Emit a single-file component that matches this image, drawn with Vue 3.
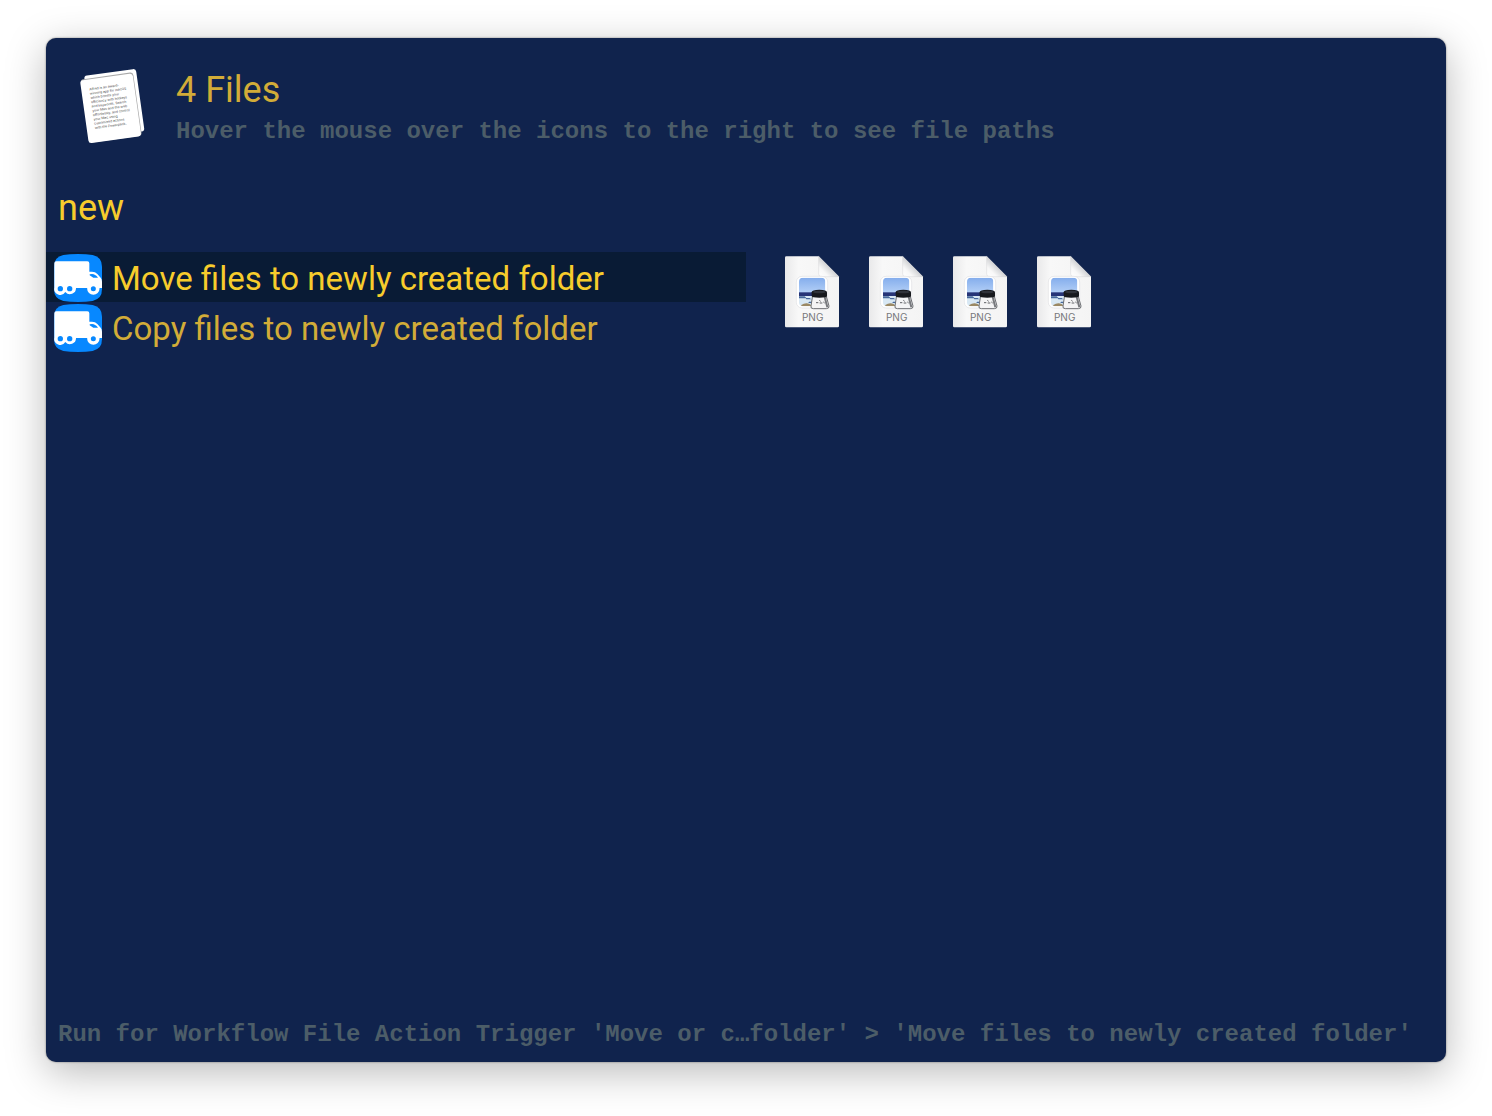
<script setup>
import { ref } from 'vue'

const query = ref('new')
const selected = ref(0)
const actions = ['Move files to newly created folder', 'Copy files to newly created folder']
const files = ['1.png', '2.png', '3.png', '4.png']
const sheetLines = [
  'Alfred is an award-',
  'winning app for macOS',
  'which boosts your',
  'efficiency with hotkeys',
  'and keywords. Search',
  'your Mac and the web',
  'effortlessly, and control',
  'your Mac using',
  'customised actions',
  'with the Powerpack.',
]
</script>

<template>
  <main class="panel">
    <header class="header">
      <svg class="sheets" viewBox="0 0 270 270" aria-hidden="true">
        <g transform="translate(42 48) rotate(-8)">
          <rect width="157" height="189" rx="9" fill="#fff" />
        </g>
        <g transform="translate(30 62) rotate(-8)">
          <rect x="2" y="-3" width="159" height="192" rx="9" fill="#a9a9a9" />
          <rect width="159" height="190" rx="9" fill="#fff" />
          <text v-for="(line, i) in sheetLines" :key="i" class="sheet-text" x="24" :y="33 + i * 13">{{ line }}</text>
        </g>
      </svg>
      <div class="heading">
        <h1 class="title">4 Files</h1>
        <p class="hint">Hover the mouse over the icons to the right to see file paths</p>
      </div>
    </header>

    <input v-model="query" class="query" type="text" aria-label="Filter actions" spellcheck="false" />

    <div class="columns">
      <ul class="actions">
        <li v-for="(action, i) in actions" :key="action">
          <button class="action" :class="{ active: i === selected }" type="button" @click="selected = i">
            <svg class="truck" viewBox="0 0 144 144" aria-hidden="true">
              <path d="M0 38Q0 9 28 3 46 0 72 0t44 3q28 6 28 35v68q0 29-28 35-18 3-44 3t-44-3Q0 135 0 106Z" fill="#0788ff" />
              <path d="M1 28q0-6 6-6h93q6 0 6 6v25h8q10 0 16 7l10 11q4 5 4 12v19h-8a18 18 0 0 1-35 0H66a18 18 0 0 1-32 12A18 18 0 0 1 1 101Z" fill="#fff" />
              <path d="M107 61v3l11 7h14q-8-11-18-11Z" fill="#0788ff" />
              <g fill="#0788ff">
                <circle cx="19" cy="104" r="8" />
                <circle cx="47" cy="104" r="8" />
              </g>
              <circle cx="118" cy="104" r="13" fill="#0788ff" stroke="#fff" stroke-width="11" />
            </svg>
            <span>{{ action }}</span>
          </button>
        </li>
      </ul>

      <ul class="files">
        <li v-for="file in files" :key="file" class="file">
          <svg class="png" viewBox="0 0 168 222" role="img" aria-label="PNG file">
            <defs>
              <linearGradient id="paper" x1="0" y1="0" x2="1" y2="0">
                <stop offset="0" stop-color="#e9e9ea" />
                <stop offset=".25" stop-color="#f8f8f8" />
                <stop offset="1" stop-color="#f4f4f4" />
              </linearGradient>
              <linearGradient id="fold" x1="0" y1="1" x2="1" y2="0">
                <stop offset="0" stop-color="#fff" />
                <stop offset=".25" stop-color="#f8f8f8" />
                <stop offset=".5" stop-color="#d2d3d5" />
              </linearGradient>
              <linearGradient id="sky" x1="0" y1="0" x2="0" y2="1">
                <stop offset="0" stop-color="#84adec" />
                <stop offset="1" stop-color="#b4d0f7" />
              </linearGradient>
              <clipPath id="photo"><rect x="45" y="68" width="79" height="86" rx="12" /></clipPath>
            </defs>
            <path d="M7 4h97l61 61v148q0 4-4 4H7q-4 0-4-4V8q0-4 4-4Z" fill="url(#paper)" />
            <path d="M104 4v53q0 8 8 8h53Z" fill="url(#fold)" stroke="#c4c5c8" stroke-width="1" />
            <rect x="37" y="64" width="94" height="95" rx="17" fill="#fff" stroke="#dfe0e2" stroke-width="2" />
            <g clip-path="url(#photo)">
              <rect x="45" y="68" width="79" height="46" fill="url(#sky)" />
              <rect x="45" y="112" width="79" height="12" fill="#263477" />
              <rect x="45" y="123" width="79" height="31" fill="#d8e8f4" />
              <path d="M45 124h17l6 6H45ZM65 129h12l5 4H67ZM75 140h15l5 4H73Z" fill="#48699c" />
              <path d="M52 150q12-8 25-3l7 7H52Z" fill="#9b8964" />
            </g>
            <path d="M86 121h40l9 32q1 8-8 8H88q-9 0-7-8Z" fill="#f4f4f5" stroke="#6c6e72" stroke-width="3" />
            <path d="m122 125 8 32" stroke="#77797d" stroke-width="6" />
            <path d="M96 143h7m3-7 4 3m-3 5h8m3-3 4 3" fill="none" stroke="#606266" stroke-width="3" />
            <path d="M83 112q0-8 23-8t23 8v11q0 5-23 5t-23-5Z" fill="#17191d" />
            <ellipse cx="106" cy="111" rx="19" ry="4" fill="#30333a" />
            <text class="ext" x="86" y="197" text-anchor="middle">PNG</text>
          </svg>
        </li>
      </ul>
    </div>

    <footer class="status">Run for Workflow File Action Trigger 'Move or c…folder' &gt; 'Move files to newly created folder'</footer>
  </main>
</template>

<style>
body {
  background: #fff;
}
</style>

<style scoped>
.panel {
  box-sizing: border-box;
  display: flex;
  flex-direction: column;
  min-height: calc(100vh - 92px);
  margin: 38px 46px 54px;
  border-radius: 10px;
  background: #10234d;
  box-shadow: 0 0 2px rgba(0, 0, 0, 0.5), 0 10px 40px rgba(0, 0, 0, 0.28);
  color: #d2ac38;
  font-family: Roboto, "Liberation Sans", sans-serif;
}

.header {
  display: flex;
  gap: 16px;
  padding: 22px 24px 0;
}

.sheets {
  flex: none;
  width: 90px;
  height: 90px;
}

.sheet-text {
  fill: #444;
  font-family: Inter, sans-serif;
  font-size: 10px;
}

.title {
  margin: 8px 0 0;
  font-size: 36px;
  font-weight: 400;
  line-height: 44px;
}

.hint,
.status {
  color: #4c5d68;
  font-family: "Liberation Mono", "Courier New", monospace;
  font-size: 24px;
  font-weight: 700;
  line-height: 32px;
}

.hint {
  margin: 4px 0 0;
}

.query {
  box-sizing: border-box;
  width: 100%;
  height: 64px;
  margin: 26px 0 12px;
  padding: 0 12px;
  border: 0;
  outline: 0;
  background: transparent;
  color: #f7cc2c;
  font-family: inherit;
  font-size: 36px;
}

.columns {
  display: flex;
  flex: 1;
}

.actions,
.files {
  box-sizing: border-box;
  width: 50%;
  margin: 0;
  padding: 0;
  list-style: none;
}

.action {
  display: flex;
  align-items: center;
  gap: 10px;
  width: 100%;
  height: 50px;
  padding: 2px 8px 0;
  border: 0;
  background: transparent;
  color: #d2ac38;
  font-family: inherit;
  font-size: 33px;
  text-align: left;
  white-space: nowrap;
}

.action.active {
  background: #091b35;
  color: #f7cc2c;
}

.truck {
  flex: none;
  width: 48px;
  height: 48px;
}

.files {
  display: flex;
  flex-wrap: wrap;
  align-content: flex-start;
  gap: 28px;
  padding: 3px 38px;
}

.png {
  display: block;
  width: 56px;
  height: 74px;
}

.ext {
  fill: #77787b;
  font-family: Inter, sans-serif;
  font-size: 30px;
}

.status {
  padding: 0 12px 11px;
  white-space: nowrap;
}
</style>
